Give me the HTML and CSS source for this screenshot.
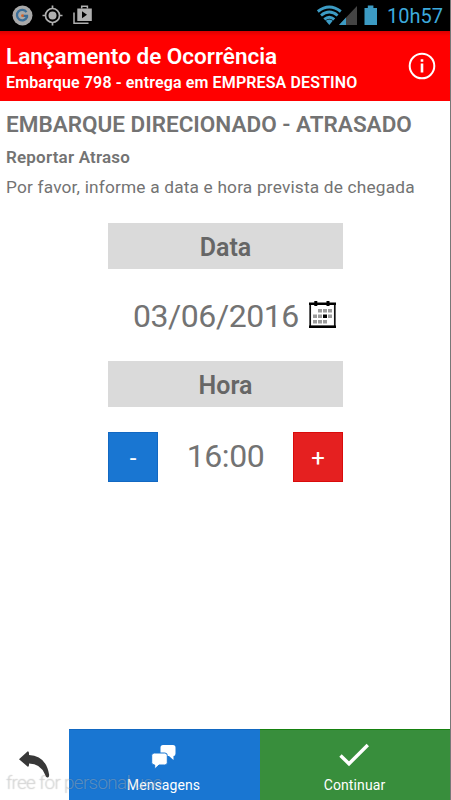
FILE: index.html
```html
<!DOCTYPE html>
<html lang="pt-BR">
<head>
<meta charset="utf-8">
<title>Lançamento de Ocorrência</title>
<link rel="stylesheet" href="styles.css">
</head>
<body>
<div class="screen">
  <div class="status">
    <svg class="status-left" width="100" height="31" viewBox="0 0 100 31">
      <circle cx="22.500" cy="15.500" r="10" fill="#a9a9a9"/>
      <path d="M26.500 12.200A5.200 5.200 0 1 0 27 17V15.800H23" fill="none" stroke="#3b6d98" stroke-width="2.300"/>
      <circle cx="22.500" cy="15.700" r="1.400" fill="#d5632b"/>
      <g fill="none" stroke="#b0b0b0" stroke-width="1.700"><circle cx="52.500" cy="15.500" r="7"/><path d="M52.500 5.500v3M52.500 22.500v3M42.500 15.500h3M59.500 15.500h3"/></g>
      <circle cx="52.500" cy="15.500" r="4" fill="#b0b0b0"/>
      <path d="M77.300 8.500h14.500v12.500H77.300z" fill="#b0b0b0"/>
      <path d="M81.700 8.500V6.200h5.700v2.300M74 12.500v10.700h14.500" fill="none" stroke="#b0b0b0" stroke-width="1.500"/>
      <path d="M82 11.200v7l5-3.500z" fill="#000"/>
    </svg>
    <svg class="status-right" width="70" height="31" viewBox="0 0 70 31">
      <g fill="none" stroke="#3c9bc4" stroke-width="2.900"><path d="M2.800 11.500Q14.300 2.400 25.800 11.500"/><path d="M6 15.500Q14.300 8.700 22.600 15.500"/><path d="M9.300 19.300Q14.300 15 19.300 19.300"/></g>
      <path d="M10.800 20.800Q14.300 18 17.800 20.800L14.300 25z" fill="#3c9bc4"/>
      <path d="M42 6v19H24z" fill="#444"/><path d="M31 17.600V25H24z" fill="#3c9bc4"/>
      <path d="M49.500 8h3.300V5.500h5.600V8H62v17H49.500z" fill="#3c9bc4"/>
    </svg>
    <span class="clock">10h57</span>
  </div>
  <header class="header">
    <div>
      <h1 class="title">Lançamento de Ocorrência</h1>
      <p class="subtitle">Embarque 798 - entrega em EMPRESA DESTINO</p>
    </div>
    <svg class="info" width="28" height="28" viewBox="0 0 28 28"><circle cx="14" cy="14" r="12.300" fill="none" stroke="#fff" stroke-width="2"/><path d="M12.700 7.200h2.600v2.500h-2.600zM12.700 11.500h2.600v9h-2.600z" fill="#fff"/></svg>
  </header>
  <main class="main">
    <h2 class="heading">EMBARQUE DIRECIONADO - ATRASADO</h2>
    <h3 class="subheading">Reportar Atraso</h3>
    <p class="text">Por favor, informe a data e hora prevista de chegada</p>
    <div class="form">
      <div class="label">Data</div>
      <div class="date">
        <span class="date-value">03/06/2016</span>
        <svg width="27" height="27" viewBox="0 0 27 27">
          <path d="M1.200 3h24.600v22.500H1.200z" fill="#fff" stroke="#111" stroke-width="1.700"/>
          <path d="M0 24.500h27V27H0zM0 1.500h27V4H0zM5.300 0h3v5h-3zM17.500 0h3v5h-3z" fill="#000"/>
          <path d="M9 8h4v3.500H9zM14 8h4v3.500h-4zM19 8h4v3.500h-4zM4 13.500h4V17H4zM9 13.500h4V17H9zM19 13.500h4V17h-4zM4 19h4v3.500H4zM9 19h4v3.500H9zM14 19h4v3.500h-4z" fill="#9c9c9c"/>
          <path d="M14 13.500h4V17h-4z" fill="#000"/>
        </svg>
      </div>
      <div class="label">Hora</div>
      <div class="time">
        <button class="step minus">-</button>
        <span class="time-value">16:00</span>
        <button class="step plus">+</button>
      </div>
    </div>
  </main>
  <footer class="footer">
    <div class="back">
      <svg width="31" height="28" viewBox="0 0 31 28"><path d="M0 8.200 8.500.4Q10.300-.3 10 4Q27 4.500 30.200 24Q30 27.500 27.700 26.300Q26.700 26 26 23.500Q21.500 12.500 10 12.500Q10.300 16.500 8.500 15.500Z" fill="#383838"/></svg>
    </div>
    <div class="action messages">
      <svg width="26" height="25" viewBox="0 0 26 25"><path d="M12 0h10q2.500 0 2.500 2.500v6q0 2.500-2 2.500v4l-4.500-4h-6q-2.500 0-2.500-2.500v-6Q9.500 0 12 0z" fill="#fff"/><path d="M3.200 8h10.600q2.500 0 2.500 2.500v7q0 2.500-2.500 2.500H8l-4.300 4v-4Q.7 20 .7 17.500v-7Q.7 8 3.200 8z" fill="#fff" stroke="#1976d2"/></svg>
      <span class="action-label">Mensagens</span>
    </div>
    <div class="action continue">
      <svg width="31" height="25" viewBox="0 0 31 25"><path d="M1.500 12.500 10 20.800 28.800 2" fill="none" stroke="#fff" stroke-width="3.400"/></svg>
      <span class="action-label">Continuar</span>
    </div>
  </footer>
  <div class="watermark">free for personal use</div>
</div>
</body>
</html>
```
FILE: styles.css
```css
* { box-sizing: border-box; }
body { margin: 0; background: #fff; font-family: Roboto, sans-serif; color: #737373; }
h1, h2, h3, p { margin: 0; white-space: nowrap; }
svg { display: block; flex: none; }
.screen { position: relative; display: flex; flex-direction: column; width: 451px; height: 800px; overflow: hidden; border-right: 1px solid #777; }
.status { display: flex; align-items: center; height: 31px; background: #000; margin-right: -1px; }
.status-right { margin-left: 215px; }
.clock { margin-left: 2px; font-size: 20px; line-height: 31px; padding-top: 2px; color: #3daadd; }
.header { display: flex; justify-content: space-between; height: 70px; padding: 11px 14px 0 6px; background: linear-gradient(#dc0000, #f00 5px); color: #fff; }
.title { font-size: 22.500px; line-height: 29px; font-weight: 600; }
.subtitle { font-size: 16px; line-height: 24px; font-weight: 600; letter-spacing: .13px; }
.info { margin-top: 10px; }
.main { flex: 1; padding: 9px 0 0 6px; }
.heading { font-size: 22.500px; line-height: 28px; font-weight: 600; }
.subheading { margin-top: 7px; font-size: 17px; line-height: 24px; font-weight: 600; letter-spacing: .2px; }
.text { margin-top: 6px; font-size: 17.300px; line-height: 24px; letter-spacing: .18px; }
.form { width: 235px; margin: 24px 0 0 102px; }
.label { height: 46px; background: #dadada; color: #666; font-size: 25px; line-height: 50px; font-weight: 600; text-align: center; }
.date { display: flex; align-items: center; height: 92px; padding-left: 25px; gap: 10px; }
.date-value, .time-value { font-size: 32px; line-height: 50px; letter-spacing: -.45px; }
.date-value { padding-top: 2px; }
.time-value { line-height: 49px; }
.date svg { margin-bottom: 1px; }
.time { display: flex; justify-content: space-between; margin-top: 25px; }
.step { width: 50px; height: 50px; padding: 3px 0 0; border: 1px solid; border-radius: 0; color: #fff; font: 400 24px/45px Roboto, sans-serif; }
.minus { background: #1976d2; border-color: #1268c2; }
.plus { background: #e52020; border-color: #d90b0b; }
.footer { display: grid; grid-template-columns: 69px 191px 1fr; height: 71px; }
.back { padding: 22px 0 0 19px; }
.action { display: flex; flex-direction: column; align-items: center; color: #fff; }
.messages { background: #1976d2; border-top: 1px solid #1268c2; padding: 15px 2px 0 0; }
.continue { background: #388e3c; border-top: 1px solid #16810f; padding: 13px 1px 0 0; }
.action-label { font-size: 14px; line-height: 18px; margin-top: 6px; }
.messages .action-label { letter-spacing: .1px; }
.continue .action-label { margin-top: 8px; letter-spacing: .1px; }
.watermark { position: absolute; left: 6px; bottom: 5px; font-size: 19px; line-height: 24px; font-weight: 300; letter-spacing: -.75px; color: rgba(255, 255, 255, .3); text-shadow: 0 0 1px rgba(0, 0, 0, .25); }
```
